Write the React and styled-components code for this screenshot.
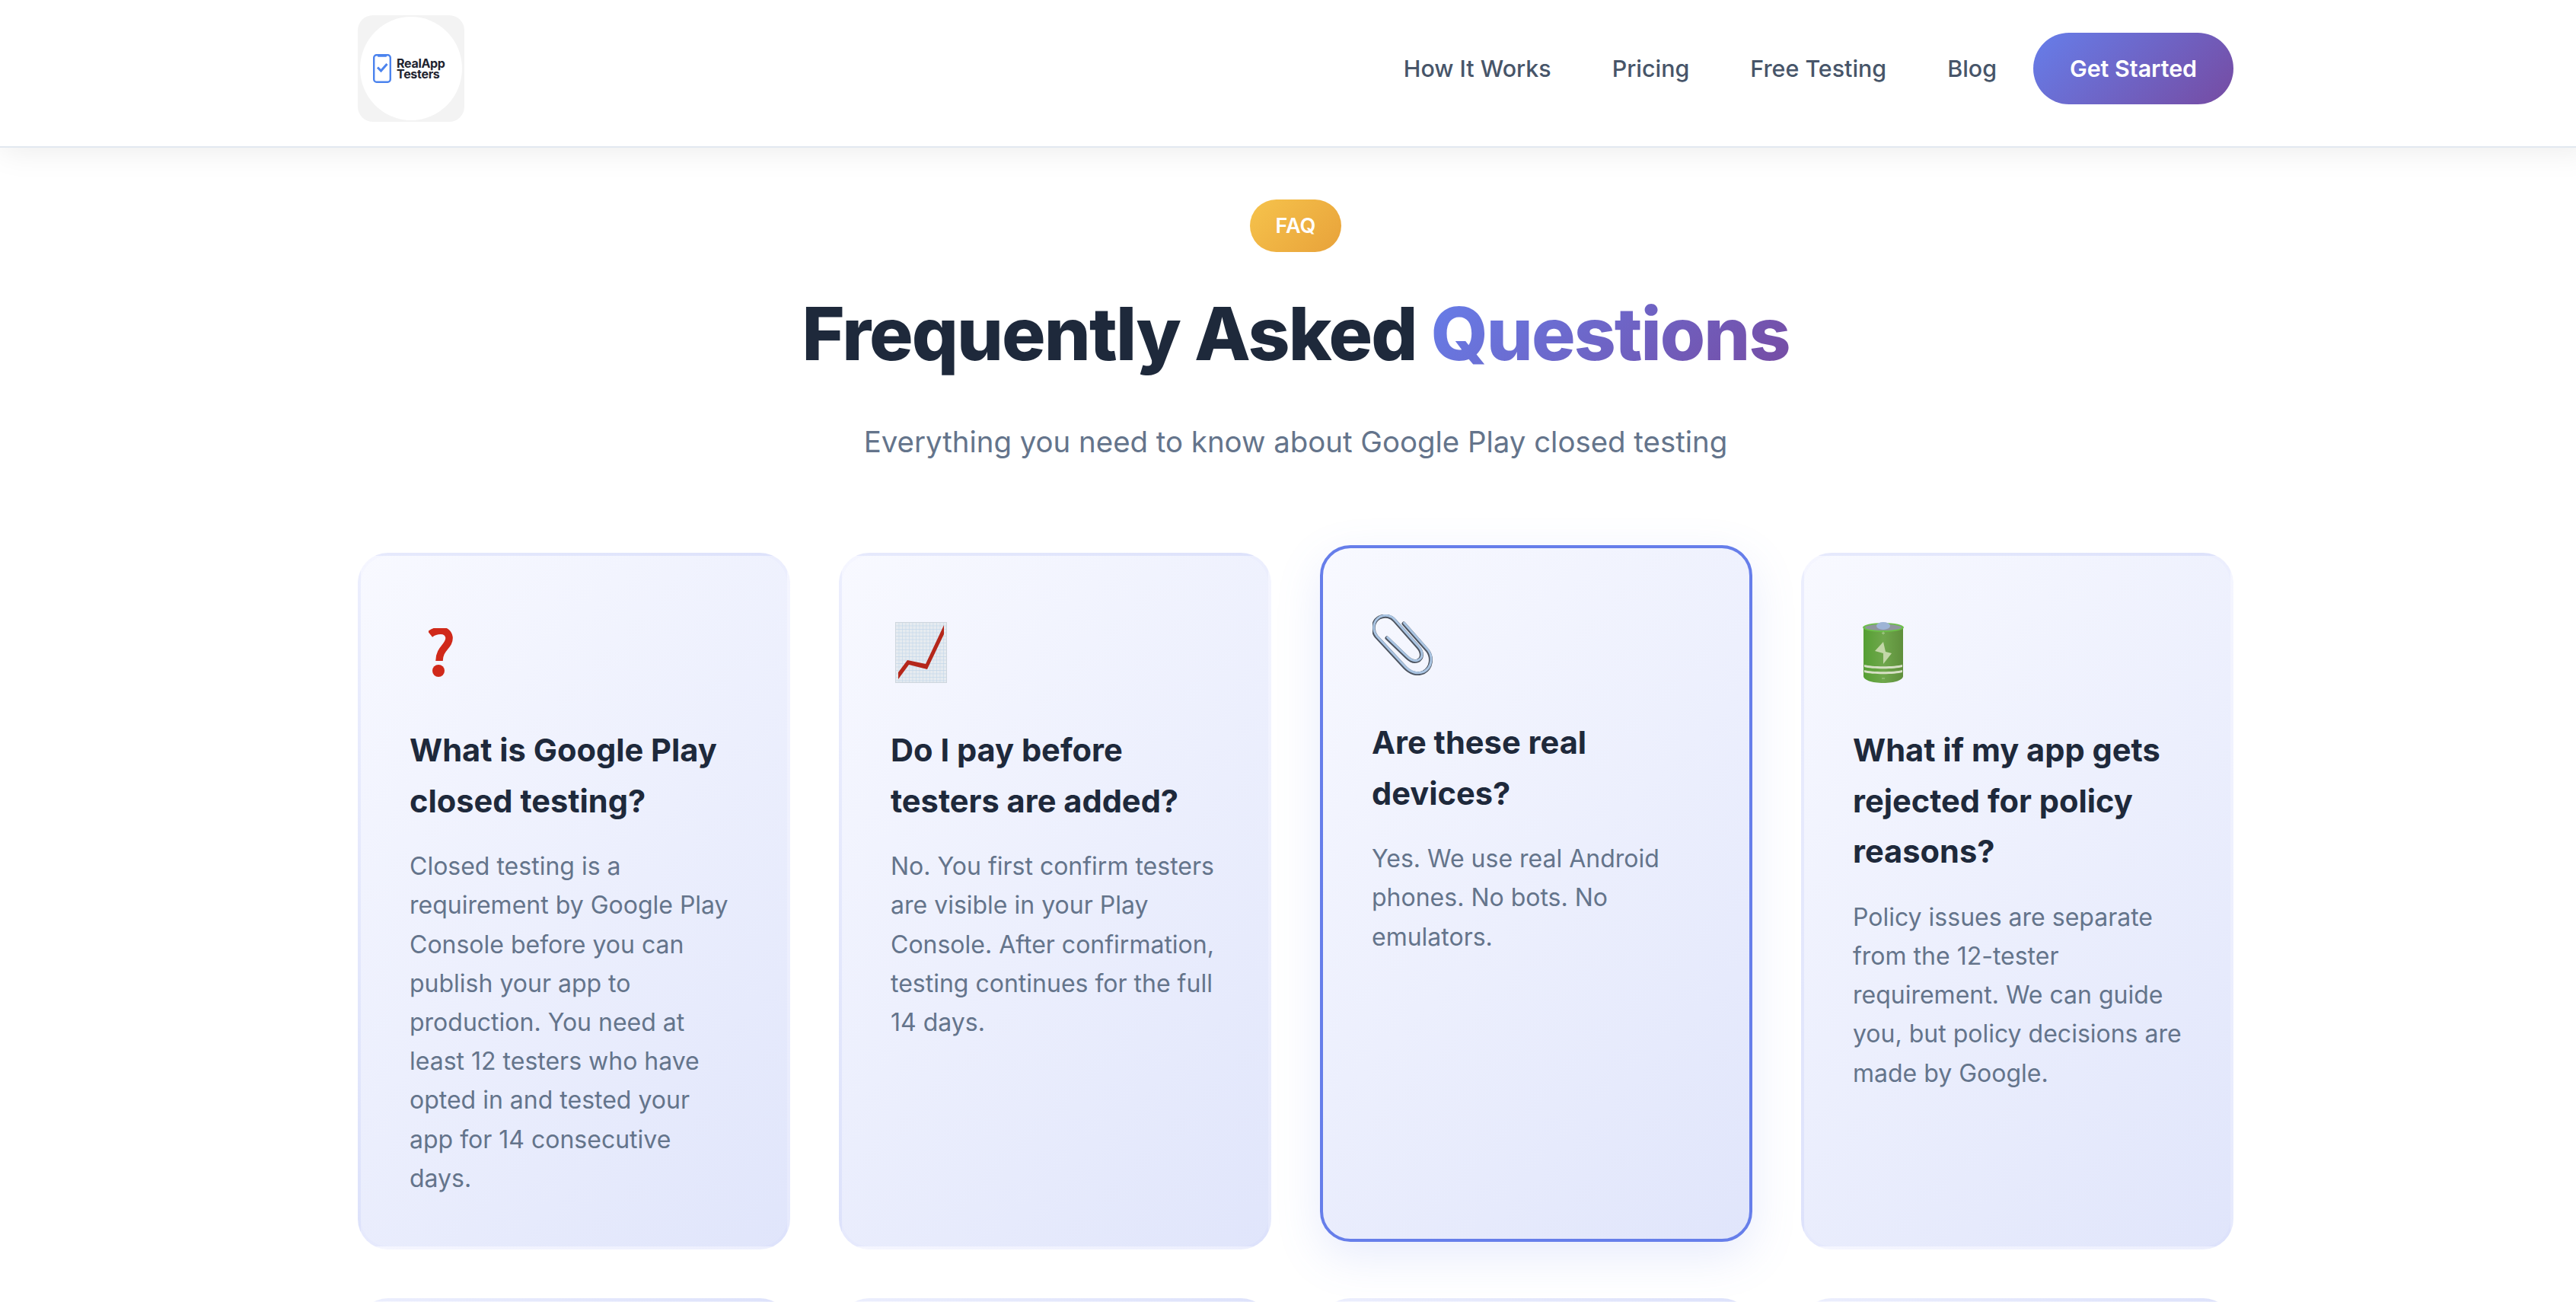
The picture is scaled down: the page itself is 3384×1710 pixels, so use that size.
import React from 'react';
import styled, {createGlobalStyle} from 'styled-components';

const GlobalStyle = createGlobalStyle`
    * {
        box-sizing: border-box;
        margin: 0;
        padding: 0;
    }
    html, body {
        height: 1710px;
        overflow: hidden;
        background: #ffffff;
        font-family: 'Inter', sans-serif;
    }
`

const Page = styled.div`
    width: 3404px;
`

const Header = styled.header`
    position: relative;
    z-index: 2;
    height: 194px;
    padding: 20px 0 0;
    background: #ffffff;
    border-bottom: 2px solid #e2e8f0;
    box-shadow: 0 4px 40px rgba(0, 0, 0, 0.08);
`

const Container = styled.div`
    max-width: 2560px;
    margin: 0 auto;
    padding: 0 48px;
`

const HeaderRow = styled(Container)`
    display: flex;
    justify-content: space-between;
    align-items: center;
`

const Logo = styled.a`
    width: 140px;
    height: 140px;
    display: flex;
    align-items: center;
    justify-content: center;
    background: #f3f3f3;
    border-radius: 20px;
`

const LogoCircle = styled.div`
    width: 134px;
    height: 136px;
    border-radius: 50%;
    background: #ffffff;
    display: flex;
    align-items: center;
    gap: 7px;
    padding-left: 17px;
`

const LogoText = styled.div`
    font-size: 16px;
    line-height: 14.5px;
    font-weight: 700;
    letter-spacing: -0.3px;
    color: #1f2430;
`

const Nav = styled.nav`
    display: flex;
    align-items: center;
`

const NavLink = styled.a`
    font-size: 30.4px;
    font-weight: 500;
    color: #475569;
    margin-right: ${props => props.$last ? '48px' : '80px'};
`

const CtaButton = styled.a`
    width: 263px;
    height: 94px;
    display: flex;
    align-items: center;
    justify-content: center;
    border-radius: 100px;
    background: linear-gradient(135deg, #667eea 0%, #764ba2 100%);
    color: #ffffff;
    font-size: 30.4px;
    font-weight: 600;
`

const Section = styled.section`
    padding-top: 68px;
`

const SectionHead = styled.div`
    display: flex;
    flex-direction: column;
    align-items: center;
`

const Badge = styled.span`
    width: 120px;
    height: 69px;
    display: flex;
    align-items: center;
    justify-content: center;
    border-radius: 50px;
    background: linear-gradient(135deg, #f6c34c 0%, #e8a23a 100%);
    color: #ffffff;
    font-size: 27px;
    font-weight: 600;
`

const Title = styled.h2`
    margin-top: 35px;
    font-size: 96px;
    line-height: 144px;
    font-weight: 800;
    letter-spacing: -1.9px;
    color: #1e293b;
`

const Accent = styled.span`
    background: linear-gradient(135deg, #667eea 0%, #764ba2 100%);
    -webkit-background-clip: text;
    background-clip: text;
    color: transparent;
`

const Subtitle = styled.p`
    margin-top: 40px;
    font-size: 38.4px;
    line-height: 61px;
    color: #64748b;
`

const Grid = styled.div`
    display: grid;
    grid-template-columns: repeat(4, 1fr);
    gap: 64px;
    margin-top: 115px;
`

const Card = styled.article`
    min-height: 400px;
    padding: 64px;
    border-radius: 40px;
    border: 4px solid ${props => props.$active ? '#667eea' : 'rgba(102, 126, 234, 0.02)'};
    background: linear-gradient(135deg, #f8f9ff 0%, #e0e5fb 100%);
    ${props => props.$active && `
        transform: translateY(-10px);
        box-shadow: 0 20px 60px rgba(102, 126, 234, 0.15);
    `}
`

const CardIcon = styled.div`
    height: 96px;
    margin-top: 23px;
    margin-bottom: 39px;
    display: flex;
    align-items: flex-start;
    padding-left: ${props => props.$left}px;
    padding-top: ${props => props.$top}px;
`

const CardTitle = styled.h3`
    font-size: 41.6px;
    line-height: 66.6px;
    font-weight: 700;
    color: #1e293b;
    margin-bottom: 27px;
`

const CardText = styled.p`
    font-size: 32px;
    line-height: 51.2px;
    color: #64748b;
`

const PhoneIcon = () => (
    <svg width="24" height="38" viewBox="0 0 24 38" fill="none">
        <rect x="1.2" y="1.2" width="21.6" height="35.6" rx="3.5" stroke="#4b83ee" strokeWidth="2.4" />
        <path d="M6 1.5h12v1.2a1 1 0 0 1-1 1H7a1 1 0 0 1-1-1z" fill="#4b83ee" />
        <path d="M6 17.5l4.5 4.5 8-9" stroke="#4b83ee" strokeWidth="3" />
    </svg>
);

const QuestionIcon = () => (
    <svg width="32" height="64" viewBox="0 0 32 64" fill="none">
        <path d="M2 8C8 3 25 -1 27 12C28 24 14 26 14 43" stroke="#d0291a" strokeWidth="9.5" />
        <circle cx="13" cy="56" r="8" fill="#d0291a" />
    </svg>
);

const ChartIcon = () => (
    <svg width="68" height="80" viewBox="0 0 68 80">
        <defs>
            <pattern id="chart-grid" width="4.5" height="4.5" patternUnits="userSpaceOnUse">
                <rect width="4.5" height="4.5" fill="#e6ebf0" />
                <path d="M0 0H4.5M0 0V4.5" stroke="#c4d8ea" strokeWidth="1.2" />
            </pattern>
        </defs>
        <rect x="0.5" y="0.5" width="67" height="79" fill="url(#chart-grid)" stroke="#ced6de" />
        <path d="M4 75V66L16 50L40 55L64 4V16L42 62L18 56Z" fill="#b5271a" />
    </svg>
);

const ClipIcon = () => {
    const d = 'M41 12L72 47C79 56 78 70 67 76C58 80 49 76 43 70L5 29C-1 21 0 9 9 4C17 0 25 3 29 8L60 43C66 50 66 58 59 61C53 63 49 60 45 56L19 31';
    return (
        <svg width="80" height="80" viewBox="0 0 80 80" fill="none" strokeLinecap="round">
            <path d={d} stroke="#4d5460" strokeWidth="5" />
            <path d={d} stroke="#a9c4e2" strokeWidth="3" transform="translate(0.6 -0.8)" />
        </svg>
    );
};

const BatteryIcon = () => (
    <svg width="54" height="80" viewBox="0 0 54 80">
        <defs>
            <linearGradient id="battery-body" x1="0" x2="1" y1="0" y2="0">
                <stop offset="0" stopColor="#559f33" />
                <stop offset="0.5" stopColor="#6fa74c" />
                <stop offset="1" stopColor="#5f8f3c" />
            </linearGradient>
        </defs>
        <path d="M1 7V71C1 76 12 80 27 80C42 80 53 76 53 71V7Z" fill="url(#battery-body)" />
        <ellipse cx="27" cy="7" rx="27" ry="6" fill="#6cc04a" />
        <ellipse cx="27" cy="7" rx="24" ry="4" fill="#8f969c" />
        <ellipse cx="27" cy="5" rx="9" ry="5" fill="#9db4d6" />
        <path d="M25 14.5h4M27 12.5v4" stroke="#a6c98c" strokeWidth="1" />
        <path d="M27 26L16 38L27 41L27 55L38 41L30 39Z" fill="#c3d7a8" />
        <path d="M2 56C12 59 42 59 52 56V59C42 62 12 62 2 59ZM2 63C12 66 42 66 52 63V66C42 69 12 69 2 66Z" fill="#d6dfc4" />
        <path d="M25 74h4" stroke="#a6c98c" strokeWidth="1" />
    </svg>
);

const faqs = [
    {
        icon: <QuestionIcon />, left: 25, top: 8,
        title: 'What is Google Play closed testing?',
        text: 'Closed testing is a requirement by Google Play Console before you can publish your app to production. You need at least 12 testers who have opted in and tested your app for 14 consecutive days.'
    },
    {
        icon: <ChartIcon />, left: 6, top: 0,
        title: 'Do I pay before testers are added?',
        text: 'No. You first confirm testers are visible in your Play Console. After confirmation, testing continues for the full 14 days.'
    },
    {
        icon: <ClipIcon />, left: 1, top: 0, active: true,
        title: 'Are these real devices?',
        text: 'Yes. We use real Android phones. No bots. No emulators.'
    },
    {
        icon: <BatteryIcon />, left: 13, top: 0,
        title: 'What if my app gets rejected for policy reasons?',
        text: 'Policy issues are separate from the 12-tester requirement. We can guide you, but policy decisions are made by Google.'
    }
];

const App = () => (
    <Page>
        <GlobalStyle />
        <Header>
            <HeaderRow>
                <Logo>
                    <LogoCircle>
                        <PhoneIcon />
                        <LogoText>RealApp<br />Testers</LogoText>
                    </LogoCircle>
                </Logo>
                <Nav>
                    <NavLink>How It Works</NavLink>
                    <NavLink>Pricing</NavLink>
                    <NavLink>Free Testing</NavLink>
                    <NavLink $last>Blog</NavLink>
                    <CtaButton>Get Started</CtaButton>
                </Nav>
            </HeaderRow>
        </Header>
        <Section>
            <Container>
                <SectionHead>
                    <Badge>FAQ</Badge>
                    <Title>Frequently Asked <Accent>Questions</Accent></Title>
                    <Subtitle>Everything you need to know about Google Play closed testing</Subtitle>
                </SectionHead>
                <Grid>
                    {faqs.map(faq => (
                        <Card key={faq.title} $active={faq.active}>
                            <CardIcon $left={faq.left} $top={faq.top}>{faq.icon}</CardIcon>
                            <CardTitle>{faq.title}</CardTitle>
                            <CardText>{faq.text}</CardText>
                        </Card>
                    ))}
                    {[0, 1, 2, 3].map(i => <Card key={i} />)}
                </Grid>
            </Container>
        </Section>
    </Page>
);

export default App;
